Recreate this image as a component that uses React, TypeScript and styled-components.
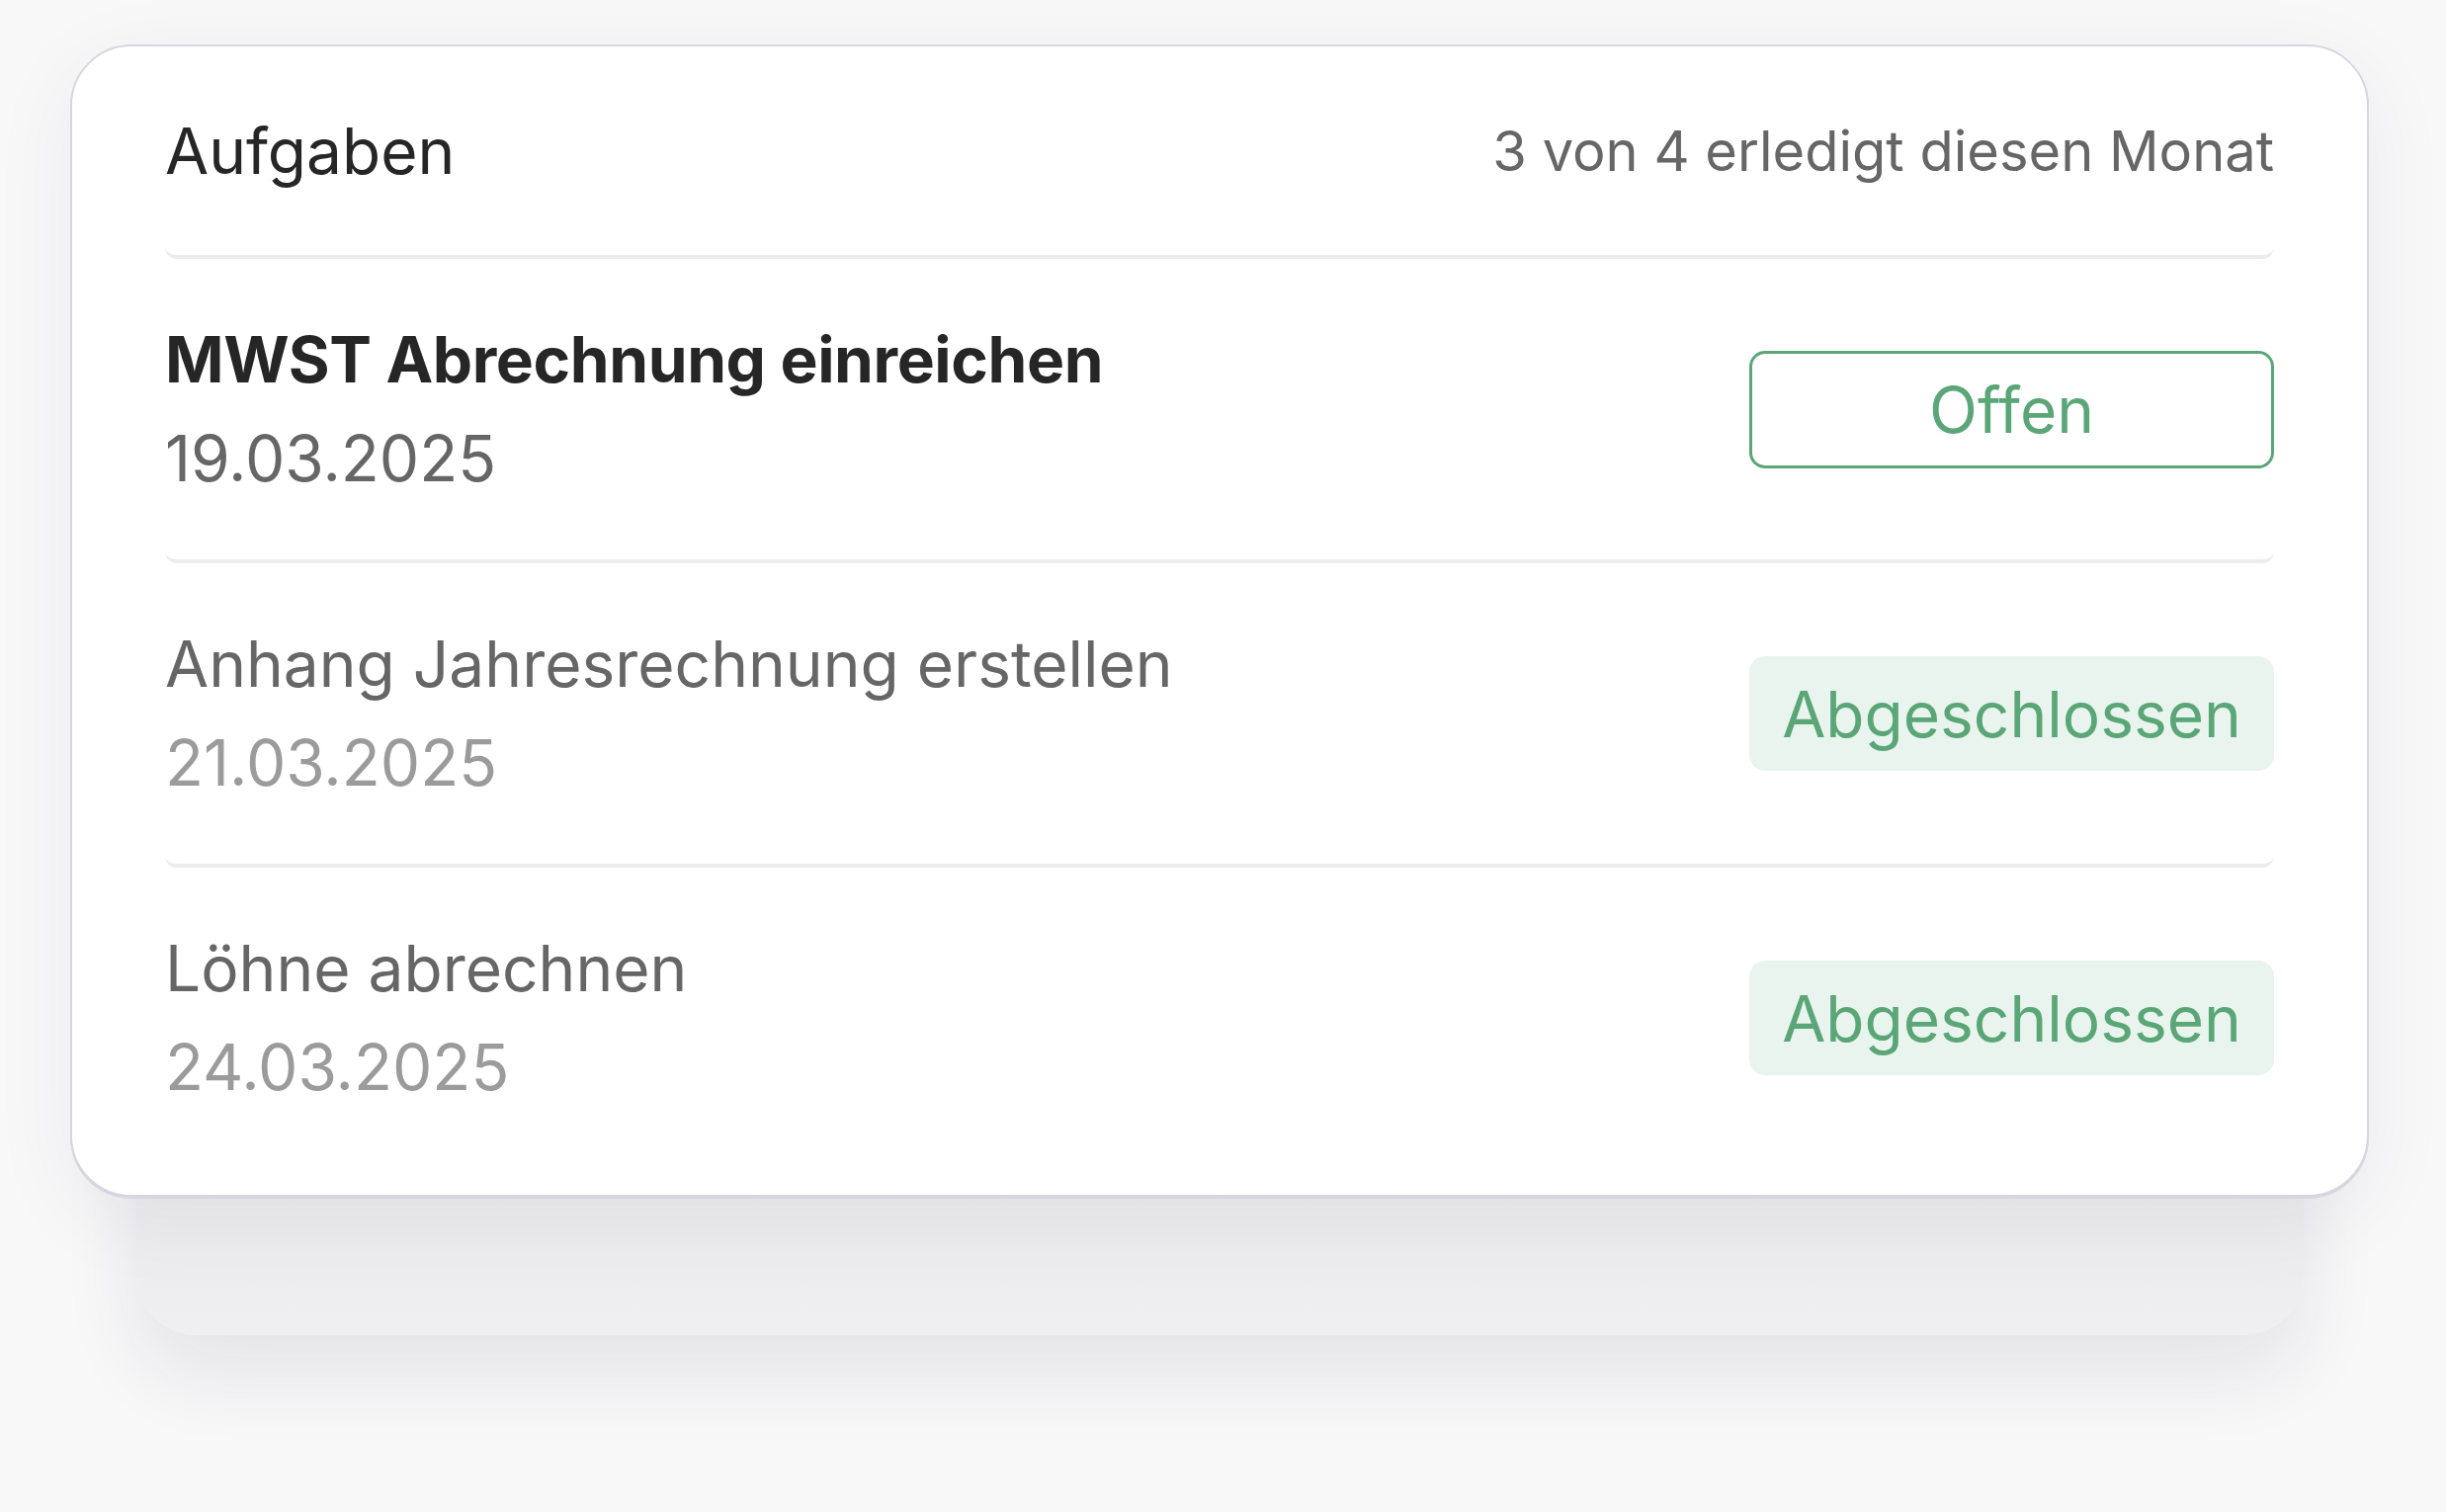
import React from 'react';
import styled, {createGlobalStyle} from 'styled-components';

const GlobalStyle = createGlobalStyle`
  html, body {
    margin: 0;
    padding: 0;
    background: #f8f8f9;
    font-family: Inter, "Noto Sans", "Liberation Sans", sans-serif;
  }
`;

const Page = styled.div`
  width: 2475px;
  height: 1530px;
  padding: 45px 0 0 71px;
  box-sizing: border-box;
  overflow: hidden;
`;

const Stack = styled.div`
  width: 2326px;
  display: flex;
  flex-direction: column;
  align-items: center;
`;

const Card = styled.div`
  position: relative;
  z-index: 1;
  width: 100%;
  box-sizing: border-box;
  background: #fff;
  border: 2px solid #d9d5e0;
  border-radius: 62px;
  box-shadow: 0 2px 0 #d9d5e0, 0 20px 90px rgba(40, 30, 70, 0.06);
  padding: 0 94px 27px;
`;

const BackCard = styled.div`
  width: 2193px;
  height: 300px;
  margin-top: -160px;
  border-radius: 62px;
  background: linear-gradient(180deg, #e7e6e9 0%, #efeef0 100%);
  box-shadow: 0 40px 80px rgba(30, 20, 50, 0.09);
`;

const Header = styled.div`
  display: flex;
  align-items: center;
  justify-content: space-between;
  padding: 58px 0 57px;
  border-bottom: 4px solid #ececed;
  border-radius: 0 0 12px 12px;
`;

const Title = styled.h2`
  margin: 0;
  font-size: 64px;
  line-height: 96px;
  font-weight: 400;
  color: #262626;
`;

const Summary = styled.span`
  font-size: 56px;
  line-height: 84px;
  color: #666;
`;

const Row = styled.div<{$last?: boolean}>`
  display: flex;
  align-items: center;
  justify-content: space-between;
  padding: 54px 0;
  border-bottom: ${p => (p.$last ? 'none' : '4px solid #ececed')};
  border-radius: 0 0 12px 12px;
`;

const Info = styled.div`
  display: flex;
  flex-direction: column;
  gap: 4px;
`;

const TaskName = styled.div<{$active?: boolean}>`
  font-size: 64px;
  line-height: 96px;
  font-weight: ${p => (p.$active ? 700 : 400)};
  letter-spacing: ${p => (p.$active ? '-0.4px' : '0')};
  color: ${p => (p.$active ? '#262626' : '#666')};
`;

const TaskDate = styled.div<{$active?: boolean}>`
  font-size: 64px;
  line-height: 96px;
  color: ${p => (p.$active ? '#666' : '#9b9b9b')};
`;

const Status = styled.div<{$done?: boolean}>`
  width: 531px;
  height: ${p => (p.$done ? '116px' : '119px')};
  box-sizing: border-box;
  display: flex;
  align-items: center;
  justify-content: center;
  border-radius: 16px;
  font-size: 64px;
  color: #5aa677;
  background: ${p => (p.$done ? '#eaf4ee' : '#fff')};
  border: ${p => (p.$done ? 'none' : '3px solid #5aa677')};
`;

const tasks = [
  {name: 'MWST Abrechnung einreichen', date: '19.03.2025', done: false},
  {name: 'Anhang Jahresrechnung erstellen', date: '21.03.2025', done: true},
  {name: 'Löhne abrechnen', date: '24.03.2025', done: true},
];

const App = () => {
  return (
    <Page>
      <GlobalStyle />
      <Stack>
        <Card>
          <Header>
            <Title>Aufgaben</Title>
            <Summary>3 von 4 erledigt diesen Monat</Summary>
          </Header>
          {tasks.map((t, i) => (
            <Row key={t.name} $last={i === tasks.length - 1}>
              <Info>
                <TaskName $active={!t.done}>{t.name}</TaskName>
                <TaskDate $active={!t.done}>{t.date}</TaskDate>
              </Info>
              <Status $done={t.done}>{t.done ? 'Abgeschlossen' : 'Offen'}</Status>
            </Row>
          ))}
        </Card>
        <BackCard />
      </Stack>
    </Page>
  );
};

export default App;
